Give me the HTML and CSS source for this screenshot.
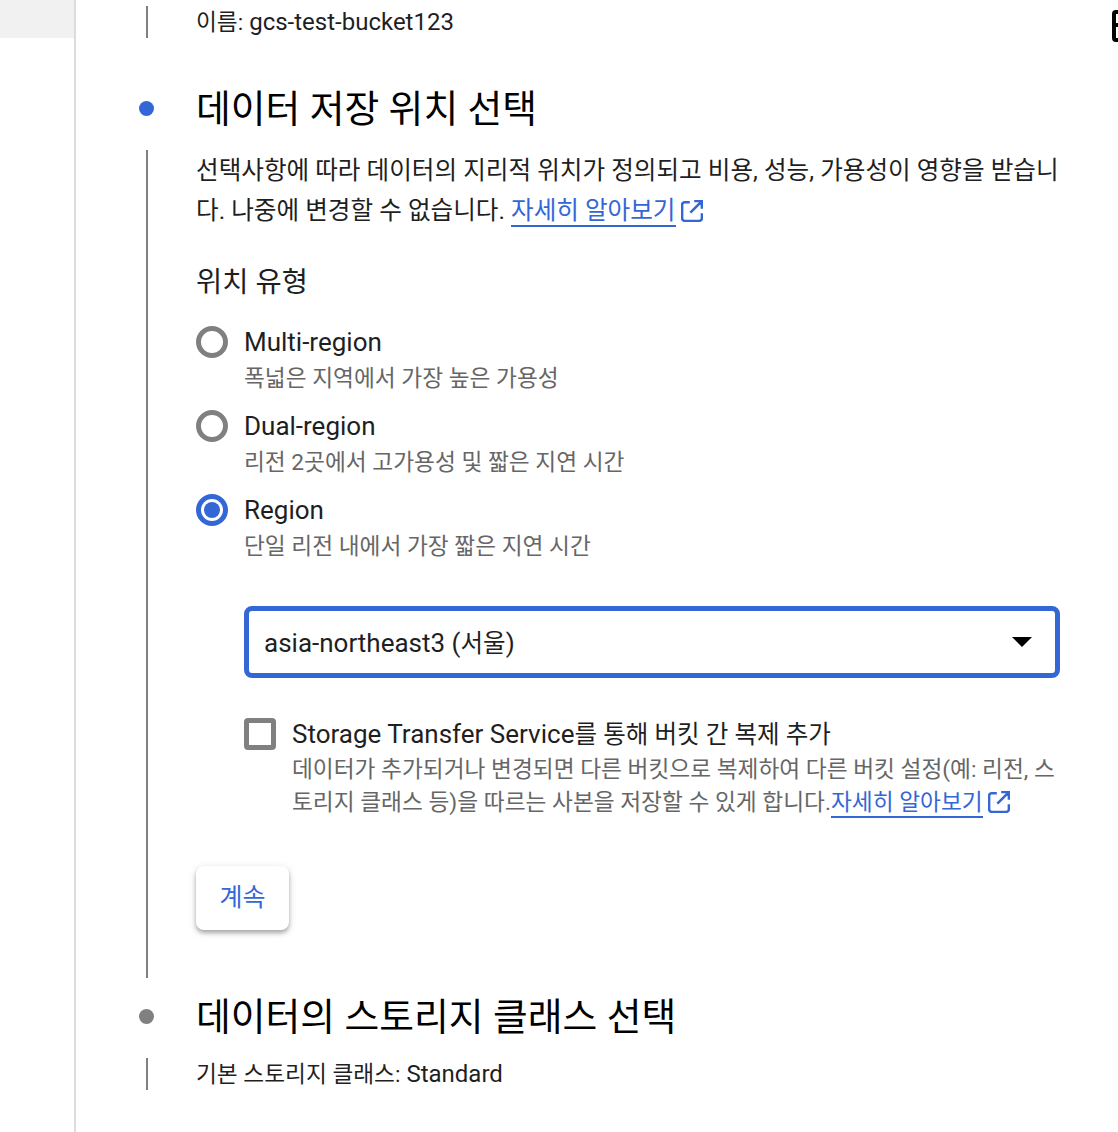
FILE: index.html
```html
<!DOCTYPE html>
<html lang="ko">
<head>
  <meta charset="UTF-8">
  <title>버킷 만들기</title>
  <link rel="stylesheet" href="styles.css">
</head>
<body>
  <div class="page">
    <aside class="sidebar">
      <div class="sidebar-top"></div>
    </aside>
    <main class="main">
      <!-- finished step -->
      <div class="step-summary first">
        <div class="rail"><span class="rail-line"></span></div>
        <p class="summary-text"><span class="ko">이름:</span> gcs-test-bucket123</p>
      </div>

      <!-- current step -->
      <div class="step-head active">
        <div class="rail"><span class="dot"></span></div>
        <h2>데이터 저장 위치 선택</h2>
      </div>
      <div class="step-body">
        <div class="rail"><span class="rail-line"></span></div>
        <div class="body-content">
          <p class="desc">선택사항에 따라 데이터의 지리적 위치가 정의되고 비용, 성능, 가용성이 영향을 받습니다. 나중에 변경할 수 없습니다. <a class="link" href="#">자세히 알아보기</a><svg class="ext-icon" viewBox="2 2 20 20"><path d="M10 4H5.500A2.500 2.500 0 0 0 3 6.500v12A2.500 2.500 0 0 0 5.500 21h13a2.500 2.500 0 0 0 2.500-2.500V14M14 3h7v7M21 3 10.500 13.500"/></svg></p>

          <h3>위치 유형</h3>

          <div class="radio-row">
            <span class="radio"></span>
            <div>
              <div class="opt-label">Multi-region</div>
              <div class="opt-help">폭넓은 지역에서 가장 높은 가용성</div>
            </div>
          </div>
          <div class="radio-row">
            <span class="radio"></span>
            <div>
              <div class="opt-label">Dual-region</div>
              <div class="opt-help">리전 2곳에서 고가용성 및 짧은 지연 시간</div>
            </div>
          </div>
          <div class="radio-row">
            <span class="radio checked"></span>
            <div>
              <div class="opt-label">Region</div>
              <div class="opt-help">단일 리전 내에서 가장 짧은 지연 시간</div>
            </div>
          </div>

          <div class="region-select">
            <span class="region-value">asia-northeast3 (<span class="ko">서울</span>)</span>
            <span class="caret"></span>
          </div>

          <div class="check-row">
            <span class="checkbox"></span>
            <div>
              <div class="opt-label">Storage Transfer Service<span class="ko">를 통해 버킷 간 복제 추가</span></div>
              <div class="check-help">데이터가 추가되거나 변경되면 다른 버킷으로 복제하여 다른 버킷 설정(예: 리전, 스토리지 클래스 등)을 따르는 사본을 저장할 수 있게 합니다.<a class="link" href="#">자세히 알아보기</a><svg class="ext-icon" viewBox="2 2 20 20"><path d="M10 4H5.500A2.500 2.500 0 0 0 3 6.500v12A2.500 2.500 0 0 0 5.500 21h13a2.500 2.500 0 0 0 2.500-2.500V14M14 3h7v7M21 3 10.500 13.500"/></svg></div>
            </div>
          </div>

          <button class="continue">계속</button>
        </div>
      </div>

      <!-- next step -->
      <div class="step-head">
        <div class="rail"><span class="dot"></span></div>
        <h2>데이터의 스토리지 클래스 선택</h2>
      </div>
      <div class="step-summary">
        <div class="rail"><span class="rail-line"></span></div>
        <p class="summary-text"><span class="ko">기본 스토리지 클래스:</span> Standard</p>
      </div>
    </main>

    <!-- clipped icon at the window edge -->
    <svg class="edge-icon" width="6" height="32" viewBox="0 0 6 32"><path d="M8 2H4a2 2 0 0 0-2 2v24a2 2 0 0 0 2 2h4M2 15h6"/></svg>
  </div>
</body>
</html>
```

FILE: styles.css
```css
body {
  margin: 0;
  background: #fff;
  color: #000;
  font-family: Roboto, "Noto Sans CJK KR", sans-serif;
}
.page {
  display: flex;
  position: relative;
  height: 1132px;
  overflow: hidden;
}
.sidebar {
  width: 74px;
  flex-shrink: 0;
  border-right: 2px solid #dcdcdc;
}
.sidebar-top {
  height: 38px;
  background: #f1f1f1;
}
.main {
  flex: 1;
  min-width: 0;
  padding-right: 58px;
}
.ko {
  font-size: 0.945em;
}
.rail {
  width: 120px;
  flex-shrink: 0;
  display: flex;
  justify-content: center;
}
.rail-line {
  width: 2px;
  background: #808080;
  margin-left: 22px;
}
.dot {
  width: 15px;
  height: 15px;
  border-radius: 50%;
  background: #808080;
  margin-left: 21px;
}
.step-summary {
  display: flex;
  height: 32px;
}
.step-summary.first {
  margin-top: 6px;
}
.summary-text {
  margin: 0;
  font-size: 24px;
  line-height: 32px;
  color: #1f1f1f;
  white-space: nowrap;
}
.step-head {
  display: flex;
  align-items: center;
  height: 64px;
  margin-top: 38px;
}
.step-head.active {
  margin-bottom: 10px;
}
.step-head.active .dot {
  background: #3367d6;
}
.step-head h2 {
  margin: 0;
  padding-top: 3px;
  font-size: 37.800px;
  line-height: 61px;
  font-weight: 400;
  color: #000;
  white-space: nowrap;
}
.step-body {
  display: flex;
  height: 828px;
}
.step-body + .step-head {
  margin-top: 6px;
  margin-bottom: 10px;
}
.body-content {
  flex: 1;
  min-width: 0;
}
.desc {
  margin: 1px 0 0;
  font-size: 24.600px;
  line-height: 40px;
  color: #1f1f1f;
}
.link {
  color: #3367d6;
  text-decoration: none;
  border-bottom: 2px solid #3367d6;
}
.ext-icon {
  width: 22px;
  height: 22px;
  margin-left: 5px;
  vertical-align: -3px;
  fill: none;
  stroke: #3367d6;
  stroke-width: 2.300;
}
h3 {
  margin: 32px 0 23px;
  font-size: 28.500px;
  line-height: 40px;
  font-weight: 400;
  color: #1f1f1f;
}
.radio-row {
  display: flex;
  gap: 16px;
  height: 84px;
}
.radio {
  width: 32px;
  height: 32px;
  box-sizing: border-box;
  border: 5px solid #808080;
  border-radius: 50%;
  flex-shrink: 0;
}
.radio.checked {
  border-color: #3367d6;
  position: relative;
}
.radio.checked::after {
  content: "";
  position: absolute;
  inset: 3px;
  border-radius: 50%;
  background: #3367d6;
}
.opt-label {
  font-size: 26px;
  line-height: 32px;
  color: #1f1f1f;
  white-space: nowrap;
}
.opt-help {
  margin-top: 4px;
  font-size: 22.700px;
  line-height: 34px;
  color: #666;
  white-space: nowrap;
}
.region-select {
  display: flex;
  justify-content: space-between;
  align-items: center;
  box-sizing: border-box;
  width: 816px;
  height: 72px;
  margin: 28px 0 0 48px;
  padding: 0 23px 0 15px;
  border: 5px solid #3367d6;
  border-radius: 8px;
  font-size: 26px;
  color: #1f1f1f;
}
.region-value {
  margin-bottom: 2px;
}
.caret {
  width: 0;
  height: 0;
  border-left: 10px solid transparent;
  border-right: 10px solid transparent;
  border-top: 10px solid #000;
}
.check-row {
  display: flex;
  gap: 16px;
  margin: 40px 0 0 48px;
}
.checkbox {
  width: 32px;
  height: 32px;
  box-sizing: border-box;
  border: 5px solid #808080;
  border-radius: 4px;
  flex-shrink: 0;
}
.check-help {
  font-size: 22.700px;
  line-height: 33px;
  color: #666;
  margin-top: 2px;
}
.continue {
  display: block;
  width: 93px;
  height: 64px;
  margin-top: 47px;
  padding: 0 0 6px;
  border: none;
  border-radius: 8px;
  background: #fff;
  color: #3367d6;
  font-family: inherit;
  font-size: 25px;
  box-shadow: 0 3px 4px rgba(60, 64, 67, 0.4), 0 2px 10px rgba(60, 64, 67, 0.12);
}
.edge-icon {
  position: absolute;
  top: 10px;
  right: 0;
  fill: none;
  stroke: #000;
  stroke-width: 4;
}
```
